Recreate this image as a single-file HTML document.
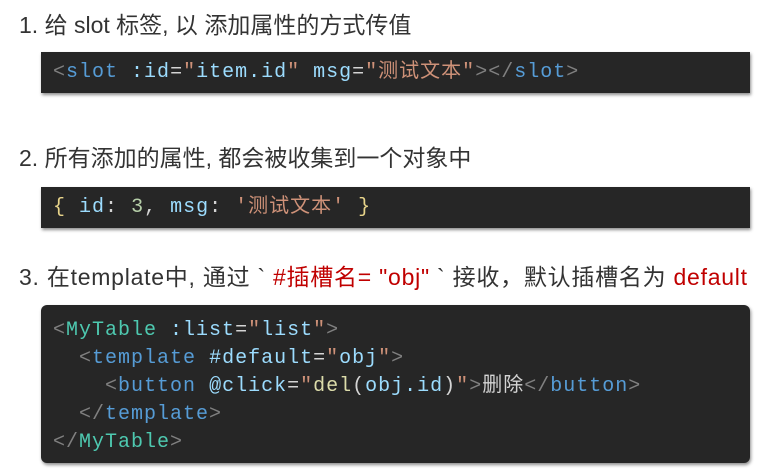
<!DOCTYPE html><html><head><meta charset="utf-8"><style>
body{margin:0;background:#fff;width:769px;height:473px;position:relative;overflow:hidden;font-family:"Liberation Sans","Noto Sans CJK SC",sans-serif;}
.h{position:absolute;left:19px;font-size:23px;color:#333;white-space:nowrap;line-height:26px}
.box{position:absolute;left:41px;width:709px;background:#262626;box-shadow:1px 2px 3px rgba(0,0,0,.45);font-family:"Liberation Mono","Noto Sans CJK SC",monospace;font-size:20px;letter-spacing:1px;color:#d4d4d4;white-space:pre;}
.g{color:#808080}.t{color:#569cd6}.a{color:#9cdcfe}.s{color:#ce9178}.c{color:#4ec9b0}.y{color:#dcdcaa}.n{color:#b5cea8}.b{color:#e8d48a}
.r{color:#c00000}
</style></head><body>
<div class="h" style="top:12px">1. 给 slot 标签, 以 添加属性的方式传值</div>
<div class="box" style="top:52px;height:41px;line-height:42px;padding-left:12px;width:697px"><span class="g">&lt;</span><span class="t">slot</span> <span class="a">:id</span>=<span class="s">"</span><span class="a">item.id</span><span class="s">"</span> <span class="a">msg</span>=<span class="s">"测试文本"</span><span class="g">&gt;&lt;/</span><span class="t">slot</span><span class="g">&gt;</span></div>
<div class="h" style="top:145px">2. 所有添加的属性, 都会被收集到一个对象中</div>
<div class="box" style="top:187px;height:41px;line-height:42px;padding-left:12px;width:697px"><span class="b">{</span> <span class="a">id</span>: <span class="n">3</span>, <span class="a">msg</span>: <span class="s">'测试文本'</span> <span class="b">}</span></div>
<div class="h" style="top:264px;letter-spacing:0.75px">3. 在template中, 通过 ` <span class="r">#插槽名= "obj"</span> ` 接收，默认插槽名为 <span class="r">default</span></div>
<div class="box" style="top:305px;height:158px;line-height:28px;padding:12px 0 0 12px;box-sizing:border-box;width:709px;border-radius:6px"><span class="g">&lt;</span><span class="c">MyTable</span> <span class="a">:list</span>=<span class="s">"</span><span class="a">list</span><span class="s">"</span><span class="g">&gt;</span>
  <span class="g">&lt;</span><span class="t">template</span> <span class="a">#default</span>=<span class="s">"</span><span class="a">obj</span><span class="s">"</span><span class="g">&gt;</span>
    <span class="g">&lt;</span><span class="t">button</span> <span class="a">@click</span>=<span class="s">"</span><span class="y">del</span>(<span class="a">obj.id</span>)<span class="s">"</span><span class="g">&gt;</span>删除<span class="g">&lt;/</span><span class="t">button</span><span class="g">&gt;</span>
  <span class="g">&lt;/</span><span class="t">template</span><span class="g">&gt;</span>
<span class="g">&lt;/</span><span class="c">MyTable</span><span class="g">&gt;</span></div>
</body></html>
